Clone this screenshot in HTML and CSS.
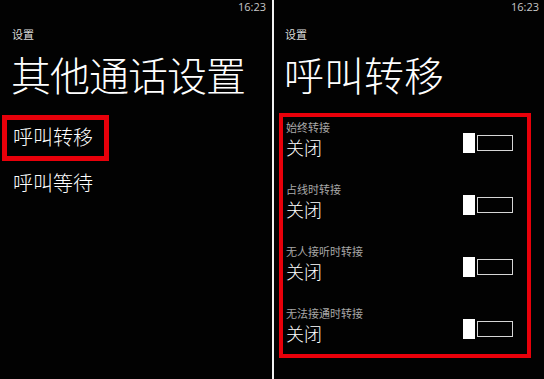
FILE: index.html
```html
<!DOCTYPE html>
<html lang="zh-CN">
<head>
<meta charset="utf-8">
<title>呼叫转移</title>
<link rel="stylesheet" href="styles.css">
</head>
<body>
<div class="page">
  <section class="screen screen-left">
    <div class="status">16:23</div>
    <div class="crumb">设置</div>
    <h1 class="title">其他通话设置</h1>
    <div class="menu">
      <div class="menu-item highlight">呼叫转移</div>
      <div class="menu-item">呼叫等待</div>
    </div>
  </section>
  <div class="divider"></div>
  <section class="screen screen-right">
    <div class="status">16:23</div>
    <div class="crumb">设置</div>
    <h1 class="title">呼叫转移</h1>
    <div class="settings">
      <div class="setting">
        <div class="setting-text">
          <div class="label">始终转接</div>
          <div class="value">关闭</div>
        </div>
        <div class="toggle"><span class="knob"></span><span class="track"></span></div>
      </div>
      <div class="setting">
        <div class="setting-text">
          <div class="label">占线时转接</div>
          <div class="value">关闭</div>
        </div>
        <div class="toggle"><span class="knob"></span><span class="track"></span></div>
      </div>
      <div class="setting">
        <div class="setting-text">
          <div class="label">无人接听时转接</div>
          <div class="value">关闭</div>
        </div>
        <div class="toggle"><span class="knob"></span><span class="track"></span></div>
      </div>
      <div class="setting">
        <div class="setting-text">
          <div class="label">无法接通时转接</div>
          <div class="value">关闭</div>
        </div>
        <div class="toggle"><span class="knob"></span><span class="track"></span></div>
      </div>
    </div>
  </section>
</div>
</body>
</html>
```

FILE: styles.css
```css
html, body {
  margin: 0;
  padding: 0;
  background: #000;
}

body {
  font-family: "Noto Sans CJK SC", "Noto Sans", "Liberation Sans", sans-serif;
  color: #fff;
}

.page {
  display: flex;
  width: 544px;
  height: 379px;
  overflow: hidden;
}

.screen {
  background: #020202;
  display: flex;
  flex-direction: column;
  height: 379px;
}

.screen-left {
  width: 272px;
}

.screen-right {
  width: 270px;
}

.divider {
  width: 2px;
  background: #f2f2f2;
}

.status {
  font-family: "Open Sans", "Liberation Sans", sans-serif;
  font-size: 11px;
  line-height: 13px;
  color: #c8c8c8;
  text-align: right;
  padding-right: 6px;
}

.screen-right .status {
  padding-right: 5px;
}

.crumb {
  font-size: 11px;
  line-height: 14px;
  margin-top: 14px;
  padding-left: 12px;
  color: #dcdcdc;
}

.screen-right .crumb {
  padding-left: 11px;
}

.title {
  margin: 9px 0 0 0;
  font-size: 40px;
  line-height: 48px;
  font-weight: 300;
  padding-left: 11px;
  letter-spacing: -1px;
  white-space: nowrap;
}

.screen-right .title {
  padding-left: 10px;
  letter-spacing: 0;
}

.menu {
  display: flex;
  flex-direction: column;
  align-items: flex-start;
  margin-top: 17px;
}

.menu-item {
  font-size: 20px;
  line-height: 26px;
  font-weight: 300;
  padding-left: 13px;
  white-space: nowrap;
}

.menu-item.highlight {
  margin-left: 2px;
  width: 80px;
  padding: 5px 11px 5px 6px;
  border: 5px solid #e8000a;
  box-sizing: content-box;
  height: 26px;
  line-height: 24px;
}

.menu-item + .menu-item {
  margin-top: 9px;
}

.settings {
  margin: 15px 13px 0 5px;
  border: 4px solid #e8000a;
  padding: 3px 14px 10px 3px;
  display: flex;
  flex-direction: column;
  gap: 24px;
}

.setting {
  display: flex;
  justify-content: space-between;
  align-items: flex-start;
}

.setting-text {
  display: flex;
  flex-direction: column;
  gap: 2px;
}

.label {
  font-size: 11px;
  line-height: 14px;
  color: #a8a8a8;
  white-space: nowrap;
}

.value {
  font-size: 18px;
  line-height: 22px;
  font-weight: 300;
  color: #fff;
}

.toggle {
  display: flex;
  align-items: center;
  gap: 2px;
  margin-top: 13px;
}

.knob {
  width: 12px;
  height: 20px;
  background: #fff;
}

.track {
  width: 34px;
  height: 14px;
  border: 1.5px solid #d6d6d6;
}
```
